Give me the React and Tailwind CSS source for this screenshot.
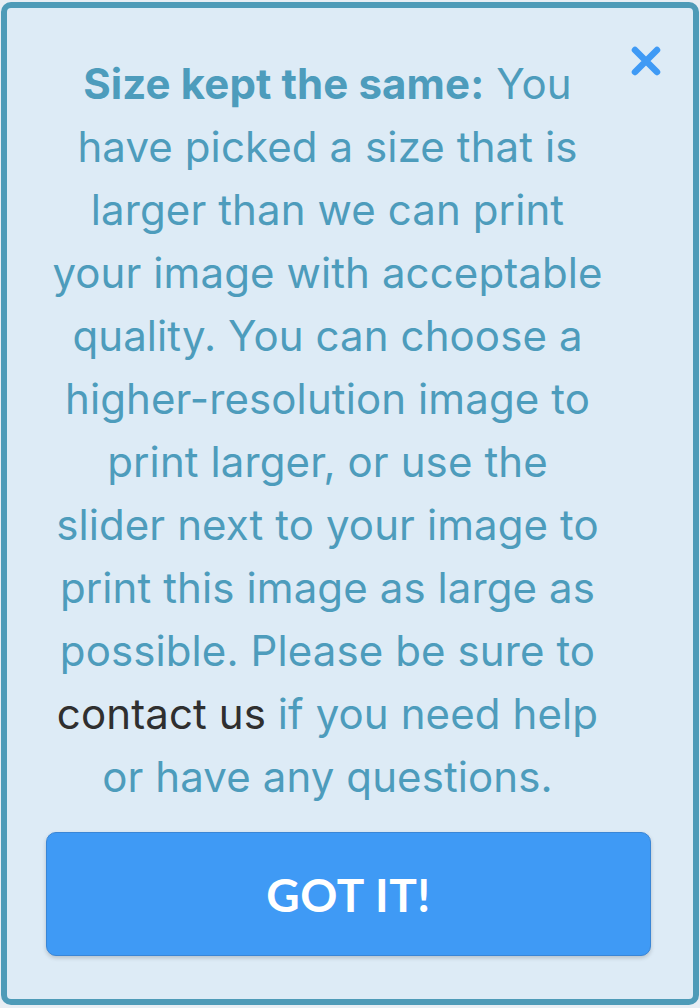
import React from "react";

const lines = [
  null,
  "have picked a size that is",
  "larger than we can print",
  "your image with acceptable",
  "quality. You can choose a",
  "higher-resolution image to",
  "print larger, or use the",
  "slider next to your image to",
  "print this image as large as",
  "possible. Please be sure to",
];

export default function App() {
  return (
    <div className="w-[700px] h-[1008px] bg-[#e8eef4] pl-px pr-px pt-[2px] pb-[3px]">
      <div
        className="relative h-full rounded-[10px] border-[6px] border-[#4e9bb8] bg-[#ddebf6] pt-[44px] pl-[39px] pr-[42px] pb-[43px] flex flex-col"
        style={{ fontFamily: "Inter, 'Open Sans', sans-serif" }}
      >
        <button className="absolute right-[28px] top-[34px] w-[38px] h-[38px] flex items-center justify-center">
          <svg width="32" height="32" viewBox="0 0 32 32">
            <path d="M5 5 L27 27 M27 5 L5 27" stroke="#3f9af5" strokeWidth="6.5" strokeLinecap="round" />
          </svg>
        </button>
        <div className="mr-[42px] text-center text-[42px] leading-[63px] text-[#4d9cbc] whitespace-nowrap tracking-[0.1px]">
          <div>
            <span className="font-bold">Size kept the same:</span> You
          </div>
          {lines.slice(1).map((l) => (
            <div key={l}>{l}</div>
          ))}
          <div>
            <span className="text-[#2f2f2f]">contact us</span> if you need help
          </div>
          <div>or have any questions.</div>
        </div>
        <button
          className="mt-[24px] h-[124px] w-full rounded-[10px] bg-[#3f9af5] border border-[#3a86d6] shadow-[0_2px_4px_rgba(0,0,0,0.18)] text-white text-[46px] font-bold tracking-[0.5px]"
          style={{ fontFamily: "Lato, 'Open Sans', sans-serif" }}
        >
          GOT IT!
        </button>
      </div>
    </div>
  );
}
